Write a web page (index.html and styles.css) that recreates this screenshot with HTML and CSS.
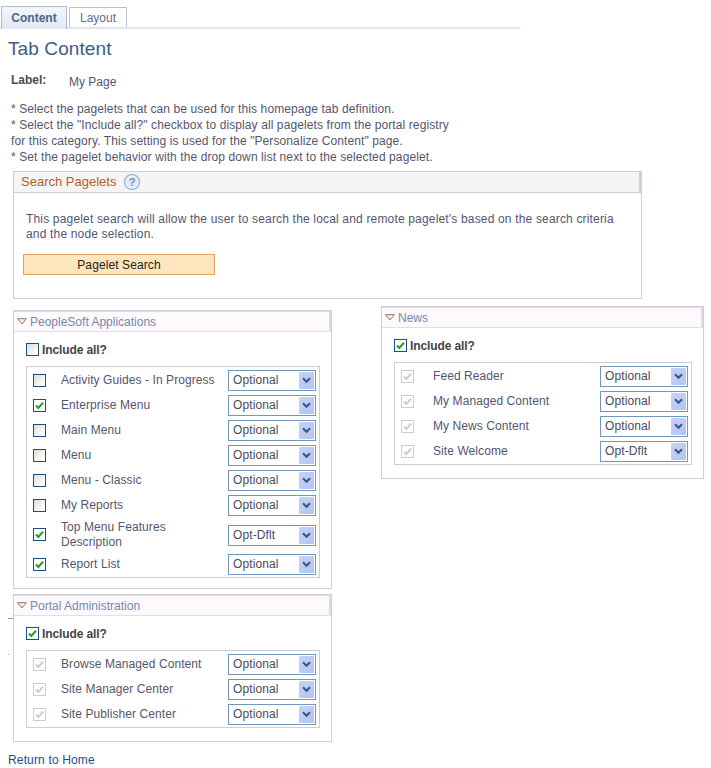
FILE: index.html
```html
<!DOCTYPE html>
<html lang="en">
<head>
<meta charset="utf-8">
<title>Tab Content</title>
<link rel="stylesheet" href="styles.css">
</head>
<body>
<svg class="defs" width="0" height="0" aria-hidden="true">
  <symbol id="arrow" viewBox="0 0 9 7"><path d="M1 1.2 4.5 4.8 8 1.2" fill="none" stroke="#3a5488" stroke-width="2"/></symbol>
  <symbol id="tick" viewBox="0 0 11 11"><path d="M2 5.5 4.4 8 9 2.6" fill="none" stroke="currentColor" stroke-width="2"/></symbol>
</svg>
<nav class="tabs">
  <a class="tab tab-active">Content</a>
  <a class="tab">Layout</a>
</nav>
<h1 class="title">Tab Content</h1>
<div class="label-row"><span class="label">Label:</span><span class="label-value">My Page</span></div>
<div class="instructions">
  <p>* Select the pagelets that can be used for this homepage tab definition.</p>
  <p>* Select the "Include all?" checkbox to display all pagelets from the portal registry</p>
  <p>for this category. This setting is used for the "Personalize Content" page.</p>
  <p>* Set the pagelet behavior with the drop down list next to the selected pagelet.</p>
</div>
<section class="search-box">
  <header class="search-head"><span>Search Pagelets</span>
    <svg class="help" width="18" height="18" viewBox="0 0 18 18"><circle cx="9" cy="9" r="7.5" fill="#f4f8fd" stroke="#9db8d8" stroke-width="1.4"/><circle cx="9" cy="9" r="5.5" fill="#dfe9f6"/><text x="9" y="13" text-anchor="middle" class="help-mark">?</text></svg>
  </header>
  <p class="search-text">This pagelet search will allow the user to search the local and remote pagelet's based on the search criteria<br>and the node selection.</p>
  <button class="search-btn" type="button">Pagelet Search</button>
</section>
<div class="columns">
  <div class="col-left">
    <i class="stray-line"></i><i class="stray-dot"></i>
    <section class="group group-apps">
      <header class="group-head"><svg class="tri" width="10" height="7" viewBox="0 0 10 7"><path d="M.7.7H9.3L5 6Z" fill="#f6f2e6" stroke="#857e63"/></svg>PeopleSoft Applications</header>
      <div class="include"><span class="cb"></span><b>Include all?</b></div>
      <div class="list">
        <div class="row"><span class="cb"></span><span class="name">Activity Guides - In Progress</span><span class="sel">Optional<span class="btn"><svg width="9" height="7"><use href="#arrow"/></svg></span></span></div>
        <div class="row"><span class="cb on"><svg width="11" height="11"><use href="#tick"/></svg></span><span class="name">Enterprise Menu</span><span class="sel">Optional<span class="btn"><svg width="9" height="7"><use href="#arrow"/></svg></span></span></div>
        <div class="row"><span class="cb"></span><span class="name">Main Menu</span><span class="sel">Optional<span class="btn"><svg width="9" height="7"><use href="#arrow"/></svg></span></span></div>
        <div class="row"><span class="cb"></span><span class="name">Menu</span><span class="sel">Optional<span class="btn"><svg width="9" height="7"><use href="#arrow"/></svg></span></span></div>
        <div class="row"><span class="cb"></span><span class="name">Menu - Classic</span><span class="sel">Optional<span class="btn"><svg width="9" height="7"><use href="#arrow"/></svg></span></span></div>
        <div class="row"><span class="cb"></span><span class="name">My Reports</span><span class="sel">Optional<span class="btn"><svg width="9" height="7"><use href="#arrow"/></svg></span></span></div>
        <div class="row row-tall"><span class="cb on"><svg width="11" height="11"><use href="#tick"/></svg></span><span class="name">Top Menu Features<br>Description</span><span class="sel">Opt-Dflt<span class="btn"><svg width="9" height="7"><use href="#arrow"/></svg></span></span></div>
        <div class="row"><span class="cb on"><svg width="11" height="11"><use href="#tick"/></svg></span><span class="name">Report List</span><span class="sel">Optional<span class="btn"><svg width="9" height="7"><use href="#arrow"/></svg></span></span></div>
      </div>
    </section>
    <section class="group group-portal">
      <header class="group-head"><svg class="tri" width="10" height="7" viewBox="0 0 10 7"><path d="M.7.7H9.3L5 6Z" fill="#f6f2e6" stroke="#857e63"/></svg>Portal Administration</header>
      <div class="include"><span class="cb on"><svg width="11" height="11"><use href="#tick"/></svg></span><b>Include all?</b></div>
      <div class="list">
        <div class="row"><span class="cb off"><svg width="11" height="11"><use href="#tick"/></svg></span><span class="name">Browse Managed Content</span><span class="sel">Optional<span class="btn"><svg width="9" height="7"><use href="#arrow"/></svg></span></span></div>
        <div class="row"><span class="cb off"><svg width="11" height="11"><use href="#tick"/></svg></span><span class="name">Site Manager Center</span><span class="sel">Optional<span class="btn"><svg width="9" height="7"><use href="#arrow"/></svg></span></span></div>
        <div class="row"><span class="cb off"><svg width="11" height="11"><use href="#tick"/></svg></span><span class="name">Site Publisher Center</span><span class="sel">Optional<span class="btn"><svg width="9" height="7"><use href="#arrow"/></svg></span></span></div>
      </div>
    </section>
  </div>
  <section class="group group-news">
    <header class="group-head"><svg class="tri" width="10" height="7" viewBox="0 0 10 7"><path d="M.7.7H9.3L5 6Z" fill="#f6f2e6" stroke="#857e63"/></svg>News</header>
    <div class="include"><span class="cb on"><svg width="11" height="11"><use href="#tick"/></svg></span><b>Include all?</b></div>
    <div class="list">
      <div class="row"><span class="cb off"><svg width="11" height="11"><use href="#tick"/></svg></span><span class="name">Feed Reader</span><span class="sel">Optional<span class="btn"><svg width="9" height="7"><use href="#arrow"/></svg></span></span></div>
      <div class="row"><span class="cb off"><svg width="11" height="11"><use href="#tick"/></svg></span><span class="name">My Managed Content</span><span class="sel">Optional<span class="btn"><svg width="9" height="7"><use href="#arrow"/></svg></span></span></div>
      <div class="row"><span class="cb off"><svg width="11" height="11"><use href="#tick"/></svg></span><span class="name">My News Content</span><span class="sel">Optional<span class="btn"><svg width="9" height="7"><use href="#arrow"/></svg></span></span></div>
      <div class="row"><span class="cb off"><svg width="11" height="11"><use href="#tick"/></svg></span><span class="name">Site Welcome</span><span class="sel">Opt-Dflt<span class="btn"><svg width="9" height="7"><use href="#arrow"/></svg></span></span></div>
    </div>
  </section>
</div>
<div class="return"><a>Return to Home</a></div>
</body>
</html>
```
FILE: styles.css
```css
* { box-sizing: border-box; }
html, body { margin: 0; padding: 0; }
body {
  width: 711px;
  height: 768px;
  overflow: hidden;
  background: #fff;
  color: #55556e;
  font: 12px/16px "Liberation Sans", Arial, sans-serif;
}
.defs { position: absolute; }
p { margin: 0; }

.tabs {
  display: flex;
  align-items: flex-end;
  gap: 2px;
  width: 520px;
  height: 29px;
  padding: 6px 0 0 1px;
  border-bottom: 2px solid #dde6f5;
}
.tab {
  width: 58px;
  height: 20px;
  border: 1px solid #b9c2d4;
  border-bottom: 0;
  text-align: center;
  line-height: 21px;
  color: #5f6d86;
}
.tab-active {
  width: 66px;
  height: 23px;
  margin-bottom: -2px;
  border: 1px solid #aebbd0;
  border-bottom: 0;
  background: linear-gradient(#f3f7fd, #dfe8f6);
  font-weight: bold;
  line-height: 22px;
  color: #4d6485;
}
.title {
  margin: 8px 0 0 8px;
  height: 24px;
  font-size: 19px;
  font-weight: normal;
  line-height: 24px;
  letter-spacing: .1px;
  color: #3d5c86;
}
.label-row {
  display: flex;
  margin: 12px 0 0 11px;
  height: 16px;
}
.label { width: 58px; font-weight: bold; margin-top: -1px; color: #4a4a58; }
.label-value { margin-top: 1px; }
.instructions { margin: 12px 0 0 11px; letter-spacing: .1px; }

.search-box {
  width: 629px;
  height: 128px;
  margin: 6px 0 0 13px;
  border: 1px solid #ccced8;
}
.search-head {
  display: flex;
  align-items: center;
  gap: 7px;
  height: 21px;
  padding-left: 7px;
  background: #f5f5f5;
  border-bottom: 1px solid #ccced8;
  border-right: 2px solid #ccced8;
  font-size: 13px;
  color: #b0602a;
}
.help-mark { font: bold 11px "Liberation Sans", Arial, sans-serif; fill: #6f8fb8; }
.search-text { margin: 19px 0 0 12px; line-height: 15px; letter-spacing: .17px; }
.search-btn {
  display: block;
  width: 192px;
  height: 21px;
  margin: 12px 0 0 9px;
  padding: 0;
  border: 1px solid #e2a262;
  background: #fde5bd;
  font: 12px "Liberation Sans", Arial, sans-serif;
  letter-spacing: .1px;
  color: #222;
}

.columns { display: flex; align-items: flex-start; margin-left: 13px; }
.col-left {
  position: relative;
  width: 319px;
  margin-top: 11px;
}
.stray-line {
  position: absolute;
  left: -5px;
  top: 308px;
  width: 5px;
  height: 1px;
  background: #999;
}
.stray-dot {
  position: absolute;
  left: -5px;
  top: 344px;
  width: 1px;
  height: 1px;
  background: #aaa;
}
.group { border: 1px solid #ccced8; }
.group-head {
  display: flex;
  align-items: center;
  gap: 3px;
  height: 21px;
  padding-left: 3px;
  background: #fdf9fd;
  border-top: 1px solid #dcdde3;
  border-right: 2px solid #dcdde3;
  border-bottom: 1px solid #dfe0e6;
  color: #7888a8;
}
.tri { flex: none; }
.group-apps { height: 279px; }
.group-portal { height: 148px; margin-top: 5px; }
.group-news { width: 323px; height: 173px; margin: 7px 0 0 49px; }

.include {
  display: flex;
  align-items: center;
  gap: 3px;
  height: 14px;
  margin: 10px 0 0 12px;
  line-height: 14px;
  color: #444;
}
.include b { position: relative; top: 1px; letter-spacing: -.1px; }
.list {
  margin: 10px 11px 0 12px;
  padding: 1px 3px 0 6px;
  border: 1px solid #ccced8;
}
.row {
  display: flex;
  align-items: center;
  height: 25px;
  line-height: 15px;
  letter-spacing: .08px;
}
.row-tall { height: 34px; padding-bottom: 2px; }
.row-tall .sel { margin-top: 2px; }
.row-tall .name { margin-top: 2px; }
.name { flex: 1; margin-left: 15px; }
.group-news .name { margin-left: 19px; }
.cb {
  display: flex;
  align-items: center;
  justify-content: center;
  flex: none;
  width: 13px;
  height: 13px;
  border: 1px solid #1c4f80;
  background: linear-gradient(135deg, #dcdcd8, #fff 85%);
  color: #1ea01e;
}
.cb.on { background: #fff; }
.cb.off {
  border-color: #cfcdc4;
  background: #fff;
  color: #cfcdc4;
}
.sel {
  display: flex;
  align-items: center;
  justify-content: space-between;
  flex: none;
  width: 88px;
  height: 21px;
  padding: 0 1px 0 4px;
  border: 1px solid #7397b8;
  background: #fff;
  letter-spacing: .1px;
  color: #4a4a58;
}
.btn {
  display: flex;
  align-items: center;
  justify-content: center;
  width: 15px;
  height: 17px;
  background: linear-gradient(135deg, #c6d3f7, #b0c4f2);
  border-radius: 1px;
}

.return { margin: 10px 0 0 8px; letter-spacing: .15px; color: #1c4f8c; }
```
